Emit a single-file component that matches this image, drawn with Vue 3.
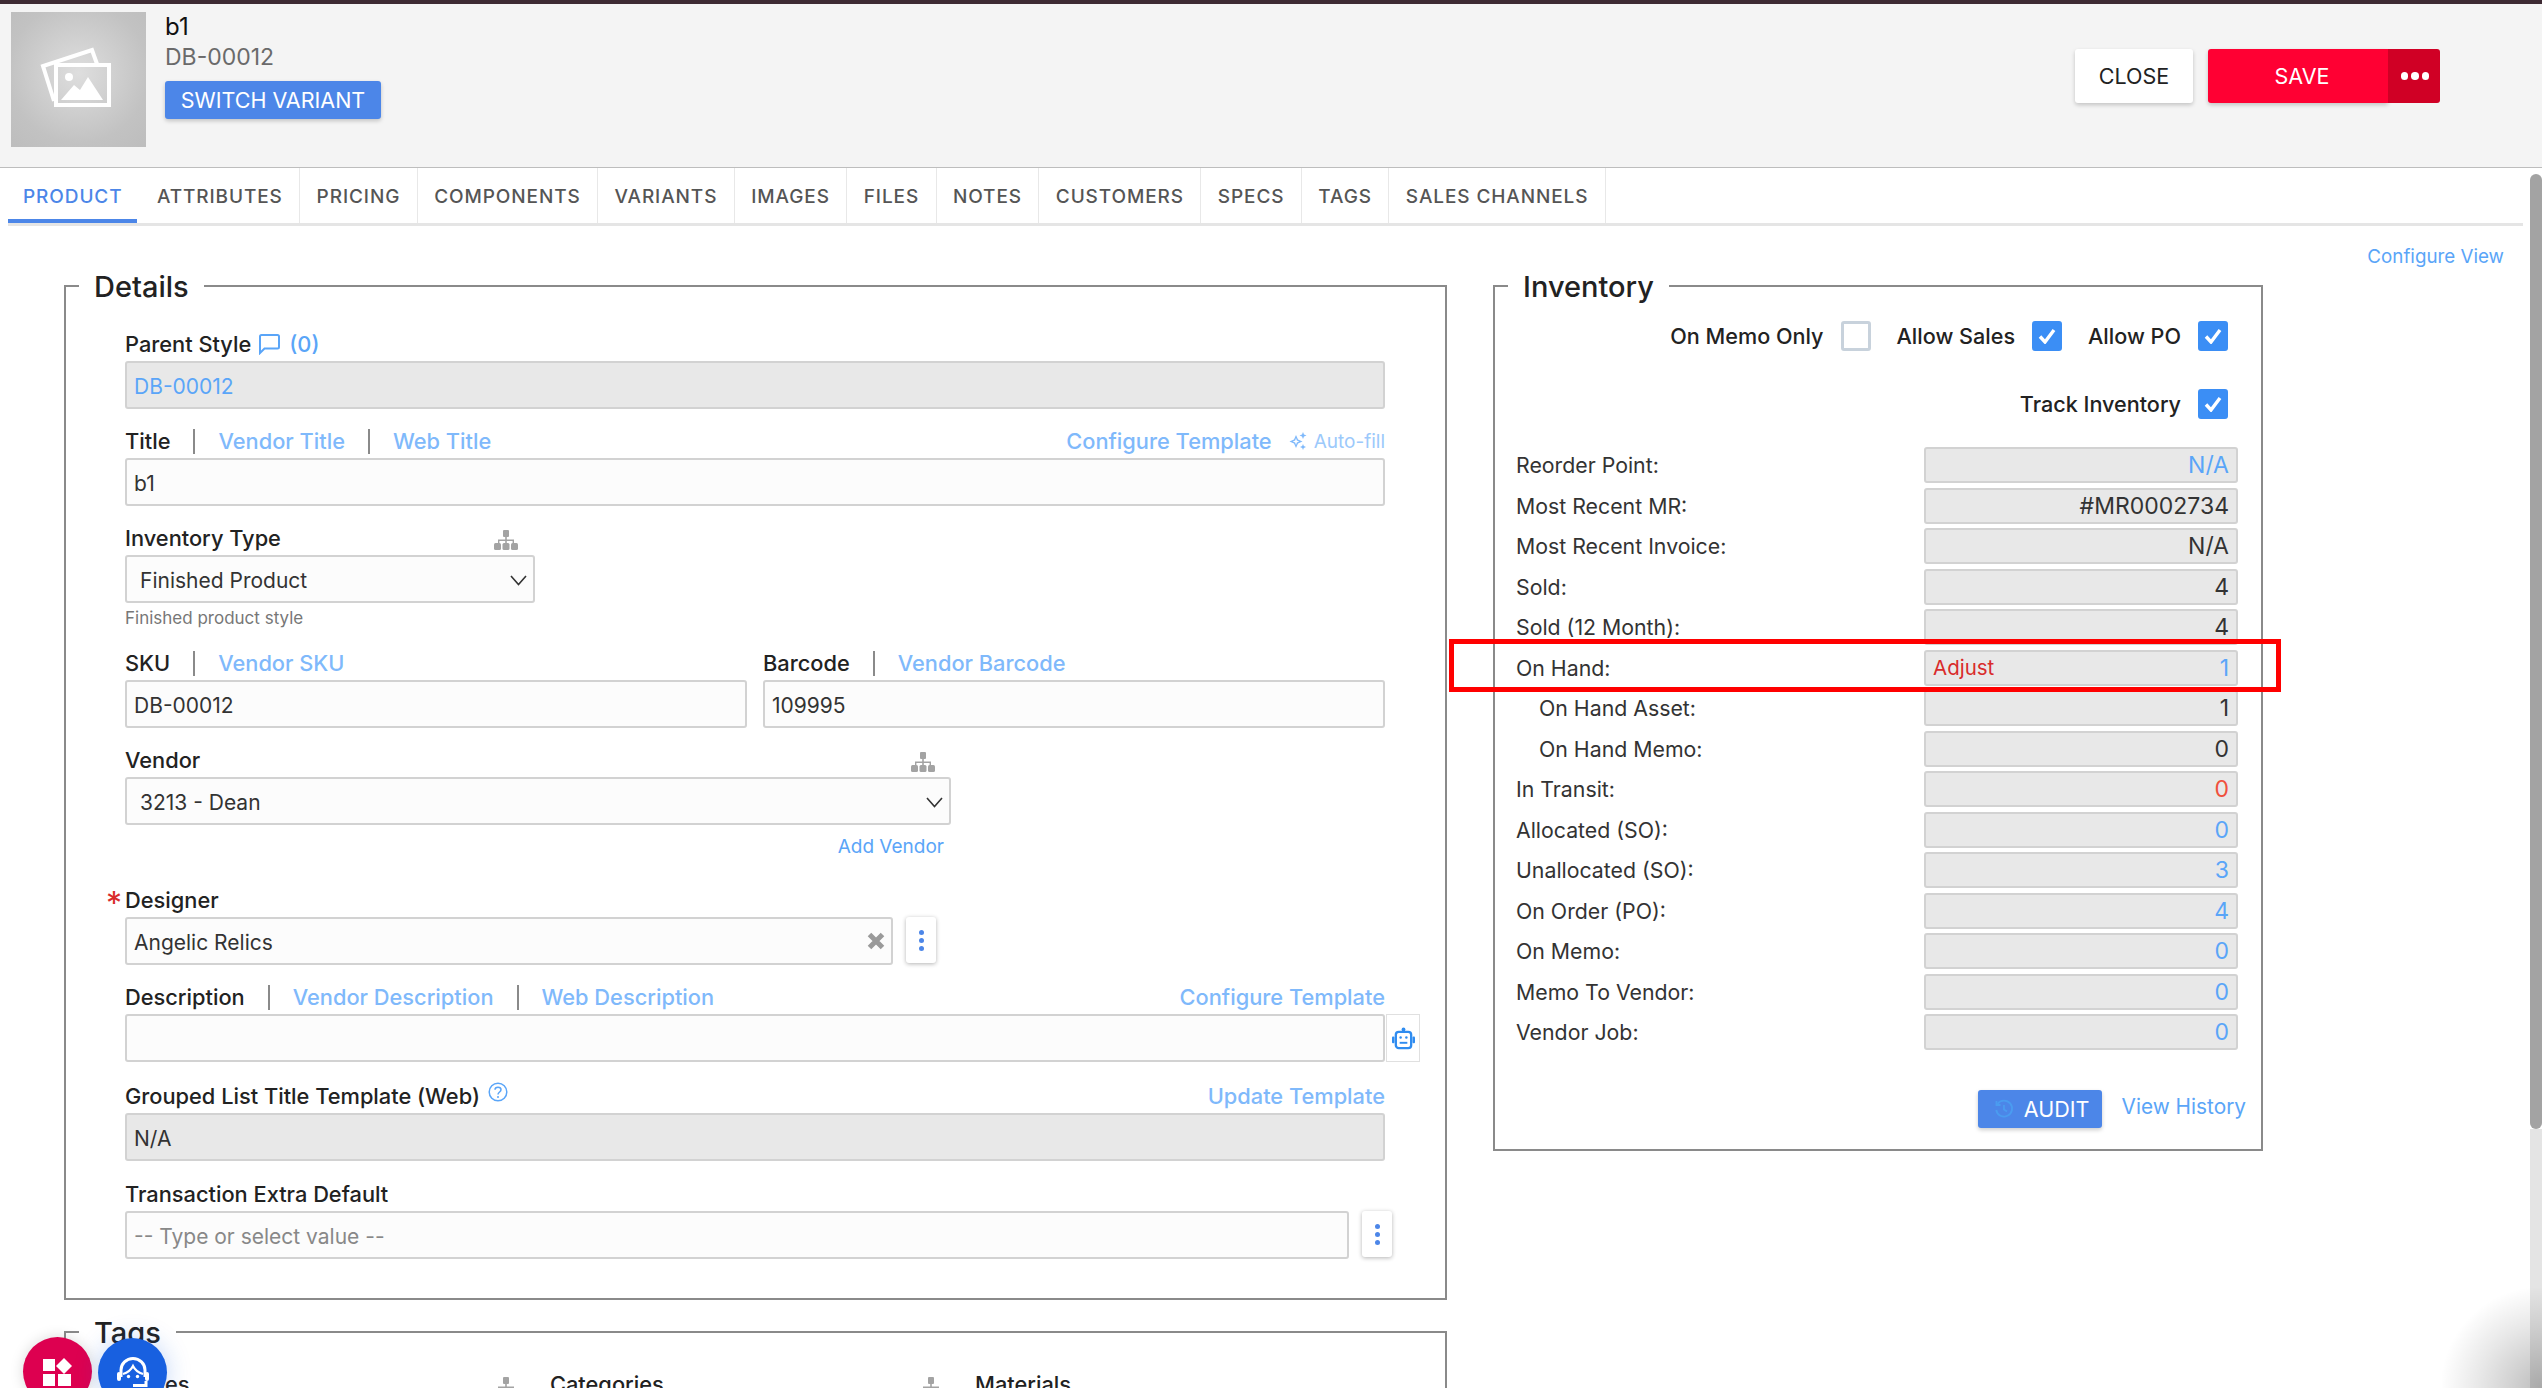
<script setup>
const tabs = ['Product', 'Attributes', 'Pricing', 'Components', 'Variants', 'Images', 'Files', 'Notes', 'Customers', 'Specs', 'Tags', 'Sales Channels']

const stockRows = [
  { label: 'Reorder Point:', value: 'N/A', tone: 'link' },
  { label: 'Most Recent MR:', value: '#MR0002734' },
  { label: 'Most Recent Invoice:', value: 'N/A' },
  { label: 'Sold:', value: '4' },
  { label: 'Sold (12 Month):', value: '4' },
  { label: 'On Hand:', value: '1', tone: 'link', adjust: true },
  { label: 'On Hand Asset:', value: '1', sub: true },
  { label: 'On Hand Memo:', value: '0', sub: true },
  { label: 'In Transit:', value: '0', tone: 'danger' },
  { label: 'Allocated (SO):', value: '0', tone: 'link' },
  { label: 'Unallocated (SO):', value: '3', tone: 'link' },
  { label: 'On Order (PO):', value: '4', tone: 'link' },
  { label: 'On Memo:', value: '0', tone: 'link' },
  { label: 'Memo To Vendor:', value: '0', tone: 'link' },
  { label: 'Vendor Job:', value: '0', tone: 'link' }
]
</script>

<template>
  <div class="page">
    <div class="top-strip"></div>

    <header class="header">
      <div class="thumb">
        <svg width="72" height="60" viewBox="0 0 72 60" fill="none" stroke="#fff" stroke-width="4">
          <path d="M14 54 L3 19 L52 3 L57 17" />
          <rect x="16" y="18" width="53" height="40" />
          <circle cx="29" cy="30" r="4" fill="#fff" stroke="none" />
          <path d="M21 53 L34 38 L40 43 L48 30 L63 53 Z" fill="#fff" stroke="none" />
        </svg>
      </div>
      <div class="header-info">
        <div class="item-title">b1</div>
        <div class="item-sku">DB-00012</div>
        <button class="btn btn-primary btn-switch">SWITCH VARIANT</button>
      </div>
      <div class="header-actions">
        <button class="btn btn-close">CLOSE</button>
        <button class="btn btn-save">SAVE</button>
        <button class="btn btn-more"><i></i><i></i><i></i></button>
      </div>
    </header>

    <div class="body">
      <main class="main">
        <nav class="tabs">
          <div v-for="(tab, i) in tabs" :key="tab" :class="['tab', { active: i === 0 }]">{{ tab }}</div>
        </nav>

        <div class="view-row"><a class="link">Configure View</a></div>

        <div class="columns">
          <div class="left-col">
            <fieldset class="box details">
              <legend>Details</legend>

              <div class="field">
                <div class="label-row">
                  <span class="lbl">Parent Style</span>
                  <svg class="comment-ico" width="23" height="22" viewBox="0 0 23 22" fill="none" stroke="#5aa5f8" stroke-width="2">
                    <path d="M2 20 V3.5 Q2 2 3.5 2 H19.5 Q21 2 21 3.5 V14 Q21 15.5 19.5 15.5 H6.5 Z" />
                  </svg>
                  <a class="link count">(0)</a>
                </div>
                <div class="input disabled link-text">DB-00012</div>
              </div>

              <div class="field">
                <div class="label-row">
                  <span class="lbl">Title</span><span class="sep"></span>
                  <a class="alt">Vendor Title</a><span class="sep"></span>
                  <a class="alt">Web Title</a>
                  <span class="spacer"></span>
                  <a class="alt">Configure Template</a>
                  <span class="autofill">
                    <svg width="18" height="18" viewBox="0 0 18 18" fill="#7fb9fb">
                      <path d="M7 3 L9 7.5 L13.5 9.5 L9 11.5 L7 16 L5 11.5 L0.5 9.5 L5 7.5 Z M7 6 L6.2 8.5 L3.8 9.5 L6.2 10.5 L7 13 L7.8 10.5 L10.2 9.5 L7.8 8.5 Z" fill-rule="evenodd" />
                      <path d="M14 0 L15 2.5 L17.5 3.5 L15 4.5 L14 7 L13 4.5 L10.5 3.5 L13 2.5 Z" />
                      <path d="M14 12 L14.8 14 L17 15 L14.8 16 L14 18 L13.2 16 L11 15 L13.2 14 Z" />
                    </svg>
                    Auto-fill
                  </span>
                </div>
                <div class="input">b1</div>
              </div>

              <div class="field w-type">
                <div class="label-row">
                  <span class="lbl">Inventory Type</span>
                  <span class="spacer"></span>
                  <svg class="org-ico org-type" width="24" height="20" viewBox="0 0 24 20" fill="#a3a3a3">
                    <rect x="9" y="0" width="6" height="7" rx="1" />
                    <path d="M11.2 7 H12.8 V9.5 H20 V13 H18.6 V11 H12.8 V13 H11.2 V11 H5.4 V13 H4 V9.5 H11.2 Z" />
                    <rect x="0" y="13" width="7" height="7" rx="1.5" />
                    <rect x="8.5" y="13" width="7" height="7" rx="1.5" />
                    <rect x="17" y="13" width="7" height="7" rx="1.5" />
                  </svg>
                </div>
                <div class="input select">
                  Finished Product
                  <svg class="chev" width="17" height="11" viewBox="0 0 17 11" fill="none" stroke="#333" stroke-width="1.6"><path d="M1 1 L8.5 9.5 L16 1" /></svg>
                </div>
                <div class="hint">Finished product style</div>
              </div>

              <div class="field two-col sku-row">
                <div class="col">
                  <div class="label-row">
                    <span class="lbl">SKU</span><span class="sep"></span>
                    <a class="alt">Vendor SKU</a>
                  </div>
                  <div class="input">DB-00012</div>
                </div>
                <div class="col">
                  <div class="label-row">
                    <span class="lbl strong">Barcode</span><span class="sep"></span>
                    <a class="alt">Vendor Barcode</a>
                  </div>
                  <div class="input">109995</div>
                </div>
              </div>

              <div class="field w-vendor">
                <div class="label-row">
                  <span class="lbl">Vendor</span>
                  <span class="spacer"></span>
                  <svg class="org-ico org-vendor" width="24" height="20" viewBox="0 0 24 20" fill="#a3a3a3">
                    <rect x="9" y="0" width="6" height="7" rx="1" />
                    <path d="M11.2 7 H12.8 V9.5 H20 V13 H18.6 V11 H12.8 V13 H11.2 V11 H5.4 V13 H4 V9.5 H11.2 Z" />
                    <rect x="0" y="13" width="7" height="7" rx="1.5" />
                    <rect x="8.5" y="13" width="7" height="7" rx="1.5" />
                    <rect x="17" y="13" width="7" height="7" rx="1.5" />
                  </svg>
                </div>
                <div class="input select">
                  3213 - Dean
                  <svg class="chev" width="17" height="11" viewBox="0 0 17 11" fill="none" stroke="#333" stroke-width="1.6"><path d="M1 1 L8.5 9.5 L16 1" /></svg>
                </div>
                <div class="add-vendor"><a class="link small">Add Vendor</a></div>
              </div>

              <div class="field designer">
                <div class="label-row">
                  <span class="required">*</span>
                  <span class="lbl">Designer</span>
                </div>
                <div class="with-menu">
                  <div class="input grow">
                    Angelic Relics
                    <svg class="clear" width="18" height="18" viewBox="0 0 18 18" fill="none" stroke="#9a9a9a" stroke-width="5"><path d="M2.5 2.5 L15.5 15.5 M15.5 2.5 L2.5 15.5" /></svg>
                  </div>
                  <button class="kebab"><i></i><i></i><i></i></button>
                </div>
              </div>

              <div class="field">
                <div class="label-row">
                  <span class="lbl">Description</span><span class="sep"></span>
                  <a class="alt">Vendor Description</a><span class="sep"></span>
                  <a class="alt">Web Description</a>
                  <span class="spacer"></span>
                  <a class="alt">Configure Template</a>
                </div>
                <div class="desc-row">
                  <div class="input grow"></div>
                  <div class="robot-btn">
                    <svg width="24" height="24" viewBox="0 0 24 24" fill="none" stroke="#2f8cf0" stroke-width="2.4">
                      <circle cx="12" cy="2.5" r="2" fill="#2f8cf0" stroke="none" />
                      <rect x="4" y="5" width="16" height="17" rx="3" />
                      <rect x="0" y="10" width="2.6" height="7" rx="1" fill="#2f8cf0" stroke="none" />
                      <rect x="21.4" y="10" width="2.6" height="7" rx="1" fill="#2f8cf0" stroke="none" />
                      <circle cx="9" cy="11" r="1.3" fill="#2f8cf0" stroke="none" />
                      <circle cx="15" cy="11" r="1.3" fill="#2f8cf0" stroke="none" />
                      <path d="M8 16.5 H16" stroke-width="2" />
                    </svg>
                  </div>
                </div>
              </div>

              <div class="field grouped">
                <div class="label-row">
                  <span class="lbl">Grouped List Title Template (Web)</span>
                  <svg class="help" width="20" height="20" viewBox="0 0 20 20" fill="none" stroke="#5aa5f8" stroke-width="1.5">
                    <circle cx="10" cy="10" r="8.8" />
                    <path d="M7 7.8 C7 4.5 13 4.5 13 7.8 C13 10 10 10 10 12.5" />
                    <circle cx="10" cy="15" r="1" fill="#5aa5f8" stroke="none" />
                  </svg>
                  <span class="spacer"></span>
                  <a class="alt">Update Template</a>
                </div>
                <div class="input disabled">N/A</div>
              </div>

              <div class="field transaction">
                <div class="label-row">
                  <span class="lbl">Transaction Extra Default</span>
                </div>
                <div class="with-menu tx-menu">
                  <div class="input grow placeholder">-- Type or select value --</div>
                  <button class="kebab"><i></i><i></i><i></i></button>
                </div>
              </div>
            </fieldset>

            <fieldset class="box tags">
              <legend>Tags</legend>
              <div class="tag-row">
                <div class="tag-col">
                  <span class="lbl">Styles</span>
                  <svg width="24" height="20" viewBox="0 0 24 20" fill="#a3a3a3">
                    <rect x="9" y="0" width="6" height="7" rx="1" />
                    <path d="M11.2 7 H12.8 V9.5 H20 V13 H4 V9.5 H11.2 Z" />
                  </svg>
                </div>
                <div class="tag-col">
                  <span class="lbl">Categories</span>
                  <svg width="24" height="20" viewBox="0 0 24 20" fill="#a3a3a3">
                    <rect x="9" y="0" width="6" height="7" rx="1" />
                    <path d="M11.2 7 H12.8 V9.5 H20 V13 H4 V9.5 H11.2 Z" />
                  </svg>
                </div>
                <div class="tag-col">
                  <span class="lbl">Materials</span>
                </div>
              </div>
            </fieldset>
          </div>

          <fieldset class="box inventory">
            <legend>Inventory</legend>

            <div class="checks first">
              <span class="check-label">On Memo Only</span><span class="check"></span>
              <span class="check-label">Allow Sales</span>
              <span class="check on"><svg width="18" height="16" viewBox="0 0 18 16" fill="none" stroke="#fff" stroke-width="3.4"><path d="M2 8.5 L7 14 L16 2" /></svg></span>
              <span class="check-label">Allow PO</span>
              <span class="check on"><svg width="18" height="16" viewBox="0 0 18 16" fill="none" stroke="#fff" stroke-width="3.4"><path d="M2 8.5 L7 14 L16 2" /></svg></span>
            </div>
            <div class="checks second">
              <span class="check-label">Track Inventory</span>
              <span class="check on"><svg width="18" height="16" viewBox="0 0 18 16" fill="none" stroke="#fff" stroke-width="3.4"><path d="M2 8.5 L7 14 L16 2" /></svg></span>
            </div>

            <div class="stock">
              <div v-for="row in stockRows" :key="row.label" class="stock-row">
                <span :class="['stock-label', { sub: row.sub }]">{{ row.label }}</span>
                <div class="stock-value">
                  <span v-if="row.adjust" class="adjust">Adjust</span>
                  <span :class="['val', row.tone]">{{ row.value }}</span>
                </div>
              </div>
            </div>

            <div class="audit-row">
              <button class="btn btn-primary btn-audit">
                <svg width="20" height="20" viewBox="0 0 20 20" fill="none" stroke="#4a9cf0" stroke-width="1.8">
                  <path d="M3.5 5 A8 8 0 1 1 2.2 11" />
                  <path d="M2.5 2 V6 H6.5" />
                  <path d="M10 6 V10.5 L13 12.5" />
                </svg>
                AUDIT
              </button>
              <a class="link history">View History</a>
            </div>
          </fieldset>
        </div>
      </main>

      <div class="scrollbar">
        <div class="thumb-bar"></div>
        <div class="track"></div>
      </div>
    </div>

    <!-- highlight drawn over the On Hand row -->
    <div class="highlight"></div>

    <div class="bubble bubble-red">
      <svg width="34" height="34" viewBox="0 0 34 34" fill="#fff">
        <rect x="1" y="1" width="12" height="12" />
        <path d="M22 0 L30 8 L22 16 L14 8 Z" />
        <rect x="1" y="16" width="12" height="12" />
        <rect x="16" y="16" width="13" height="12" />
      </svg>
    </div>
    <div class="bubble bubble-blue">
      <svg width="34" height="34" viewBox="0 0 34 34" fill="none" stroke="#fff" stroke-width="3">
        <path d="M5 20 V13 A12 11.5 0 0 1 29 13 V20" />
        <path d="M7 17 Q14 15 17 9 Q20 15 27 17" stroke-width="2.2" />
        <circle cx="12.5" cy="19.5" r="1.7" fill="#fff" stroke="none" />
        <circle cx="21.5" cy="19.5" r="1.7" fill="#fff" stroke="none" />
        <rect x="1" y="15" width="4" height="9" rx="2" fill="#fff" stroke="none" />
        <rect x="29" y="15" width="4" height="9" rx="2" fill="#fff" stroke="none" />
        <path d="M30 24 V28.5 H17" />
      </svg>
    </div>
    <div class="corner-shade"></div>
  </div>
</template>

<style>
html, body { margin: 0; background: #fff; }
</style>

<style scoped>
.page {
  position: relative;
  height: 1388px;
  overflow: hidden;
  display: flex;
  flex-direction: column;
  background: #fff;
  color: #222;
  font-family: Inter, "Liberation Sans", sans-serif;
  font-size: 21px;
}
.top-strip { height: 4px; background: #3d2a33; flex-shrink: 0; }

.header {
  height: 163px;
  flex-shrink: 0;
  display: flex;
  background: #f4f4f4;
  border-bottom: 1px solid #bdbdbd;
  box-sizing: content-box;
}
.thumb {
  width: 135px;
  height: 135px;
  margin: 8px 0 0 11px;
  background: radial-gradient(circle at 50% 45%, #dedede 0%, #c2c2c2 70%, #bdbdbd 100%);
  display: flex;
  align-items: center;
  justify-content: center;
}
.thumb svg { margin: 0 6px 5px 0; }
.header-info { padding: 9px 0 0 19px; flex: 1; }
.item-title { font-size: 24px; line-height: 28px; color: #111; }
.item-sku { font-size: 23px; line-height: 28px; margin-top: 2px; color: #6a6a6a; }
.btn {
  border: none;
  border-radius: 3px;
  font-family: inherit;
  cursor: pointer;
}
.btn-primary { background: #4c86e8; color: #fff; box-shadow: 0 2px 4px rgba(0,0,0,.2); }
.btn-switch { margin-top: 10px; width: 216px; height: 38px; font-size: 21.5px; padding: 0; display: block; }
.header-actions { display: flex; padding: 45px 102px 0 0; align-items: flex-start; }
.btn-close { width: 118px; height: 54px; background: #fff; color: #222; font-size: 21.5px; margin-right: 15px; box-shadow: 0 2px 4px rgba(0,0,0,.2); }
.btn-save { width: 180px; height: 54px; background: #ff0033; color: #fff; font-size: 21.5px; border-radius: 3px 0 0 3px; box-shadow: 0 2px 4px rgba(0,0,0,.2); padding: 0 0 0 8px; }
.btn-more {
  width: 52px;
  height: 54px;
  background: #d00025;
  border-radius: 0 3px 3px 0;
  display: flex;
  align-items: center;
  justify-content: center;
  gap: 3px;
  padding: 0 0 0 2px;
}
.btn-more i { width: 7.5px; height: 7.5px; border-radius: 50%; background: #fff; display: block; }

.body { flex: 1; display: flex; min-height: 0; }
.main { flex: 1; min-width: 0; }

.tabs {
  display: flex;
  height: 55px;
  margin: 0 7px 0 8px;
  border-bottom: 3px solid #e5e5e5;
  box-sizing: content-box;
}
.tab {
  padding: 0 15px;
  line-height: 57px;
  height: 55px;
  font-size: 19px;
  font-weight: 500;
  letter-spacing: .9px;
  text-transform: uppercase;
  color: #555;
  border-right: 1px solid #e8e8e8;
  margin-right: 3px;
  position: relative;
}
.tab + .tab { margin-right: 0; padding: 0 16.45px; }
.tab.active { color: #4c86e8; border-right: none; }
.tab.active::after {
  content: '';
  position: absolute;
  left: 0;
  right: 0;
  bottom: 0;
  height: 4px;
  background: #4c86e8;
}

.view-row { height: 43px; display: flex; align-items: flex-end; justify-content: flex-end; padding-right: 26px; }
.view-row .link { font-size: 18.8px; line-height: 24px; }
.link { color: #5aa5f8; }
.alt { color: #7fb9fb; font-weight: 500; font-size: 21.8px; }

.columns { display: flex; align-items: flex-start; gap: 46px; padding-left: 64px; }
.left-col { display: flex; flex-direction: column; gap: 15px; }

.box { margin: 0; padding: 0; border: 2px solid #8a8a8a; min-width: 0; box-sizing: border-box; }
.box legend { margin-left: 13px; padding: 0 15px; font-size: 29px; line-height: 34px; font-weight: 500; color: #222; position: relative; top: 1px; }

.details { width: 1383px; padding: 29px 60px 39px 59px; }
.box.details legend { margin-left: -46px; }
.tags { width: 1383px; height: 300px; }

.field { margin-top: 20px; }
.field:first-of-type { margin-top: 0; }
.label-row { height: 24px; margin-bottom: 5px; display: flex; align-items: center; }
.lbl { font-weight: 500; color: #222; font-size: 21.8px; line-height: 24px; }
.spacer { flex: 1; }
.sep { width: 2px; height: 25px; background: #8a8a8a; margin: 0 23px; }
.count { font-weight: 500; font-size: 21.8px; margin-left: 8px; }
.comment-ico { margin-left: 7px; }
.autofill { margin-left: 17px; font-size: 19px; color: #9cc9fb; display: flex; align-items: center; gap: 7px; }

.input {
  height: 48px;
  box-sizing: border-box;
  border: 2px solid #d2d2d2;
  border-radius: 3px;
  background: #fcfcfc;
  padding: 2px 7px 0;
  display: flex;
  align-items: center;
  color: #333;
  font-size: 21px;
  position: relative;
}
.input.disabled { background: #e8e8e8; }
.input.link-text { color: #5aa5f8; }
.input.placeholder { color: #888; }
.input.grow { flex: 1; }
.input.select { padding-left: 13px; justify-content: space-between; padding-right: 6px; }

.w-type { width: 410px; }
.hint { font-size: 17px; line-height: 22px; margin-top: 4px; color: #777; }
.org-type { margin-right: 17px; margin-top: 4px; }
.two-col { display: flex; gap: 16px; }
.two-col .col { flex: 1; }
.sku-row { margin-top: 22px; }
.w-vendor { width: 826px; }
.org-vendor { margin-right: 16px; margin-top: 4px; }
.add-vendor { text-align: right; margin-top: 9px; padding-right: 7px; line-height: 24px; }
.small { font-size: 19px; }

.designer { margin-top: 29px; position: relative; }
.required { position: absolute; left: -19px; color: #d92b2b; font-size: 32px; line-height: 32px; top: 0; }
.with-menu { display: flex; gap: 13px; width: 811px; align-items: flex-start; }
.tx-menu { width: 1267px; }
.clear { position: absolute; right: 6px; top: 13px; }
.kebab {
  width: 30px;
  height: 46px;
  padding: 0;
  border: none;
  background: #fff;
  border-radius: 3px;
  box-shadow: 0 1px 4px rgba(0,0,0,.3);
  display: flex;
  flex-direction: column;
  align-items: center;
  justify-content: center;
  gap: 3px;
  flex-shrink: 0;
}
.kebab i { width: 5px; height: 5px; border-radius: 50%; background: #4c86e8; display: block; }

.desc-row { display: flex; margin-right: -35px; }
.robot-btn {
  width: 34px;
  height: 48px;
  box-sizing: border-box;
  border: 1px solid #e0e0e0;
  margin-left: 1px;
  display: flex;
  align-items: center;
  justify-content: center;
}
.robot-btn svg { width: 23px; height: 27px; }
.grouped { margin-top: 22px; }
.help { margin-left: 8px; margin-top: -9px; }
.transaction { margin-top: 21px; }

.tag-row { display: flex; padding: 23px 0 0 59px; }
.tag-col { width: 425px; display: flex; align-items: flex-start; justify-content: space-between; }
.tag-col svg { margin: 5px 32px 0 0; }

.inventory { width: 770px; padding: 0 0 21px; }
.checks { display: flex; justify-content: flex-end; align-items: center; padding-right: 33px; }
.checks.first { margin-top: 18px; }
.checks.second { margin-top: 38px; }
.check-label { font-weight: 500; font-size: 21.6px; margin: 0 17px 0 26px; color: #222; }
.check {
  width: 30px;
  height: 30px;
  box-sizing: border-box;
  border: 3px solid #c8d2dc;
  border-radius: 3px;
  background: #fff;
  display: flex;
  align-items: center;
  justify-content: center;
}
.check.on { background: #3b8ef5; border-color: #3b8ef5; }

.stock { margin-top: 28px; padding: 0 23px 0 21px; display: flex; flex-direction: column; gap: 4.5px; }
.stock-row { display: flex; align-items: center; justify-content: space-between; height: 36px; }
.stock-label { font-size: 21.3px; color: #333; }
.stock-label.sub { margin-left: 23px; }
.stock-value {
  width: 314px;
  height: 36px;
  box-sizing: border-box;
  border: 2px solid #d2d2d2;
  border-radius: 3px;
  background: #e8e8e8;
  padding: 0 7px;
  display: flex;
  align-items: center;
  justify-content: space-between;
}
.val { margin-left: auto; font-size: 23px; color: #333; }
.val.link { color: #5aa5f8; }
.val.danger { color: #f0503c; }
.adjust { color: #d92b2b; font-size: 20.5px; }

.audit-row { margin-top: 40px; display: flex; justify-content: flex-end; align-items: flex-start; gap: 20px; padding-right: 15px; }
.btn-audit {
  width: 124px;
  height: 38px;
  font-size: 21.5px;
  display: flex;
  align-items: center;
  justify-content: center;
  gap: 10px;
  padding: 0 0 0 4px;
}
.history { font-size: 20.8px; line-height: 34px; }

.scrollbar { width: 12px; flex-shrink: 0; padding-top: 6px; display: flex; flex-direction: column; }
.thumb-bar { height: 955px; background: #a3a3a3; border-radius: 8px; flex-shrink: 0; }
.track { flex: 1; background: #e4e4e4; }

.highlight {
  position: absolute;
  left: 1449px;
  top: 639px;
  width: 832px;
  height: 53px;
  box-sizing: border-box;
  border: 5px solid #f00;
}

.bubble {
  position: absolute;
  width: 69px;
  height: 69px;
  border-radius: 50%;
  display: flex;
  align-items: flex-start;
  justify-content: center;
}
.bubble-red { left: 23px; top: 1337px; background: #dd0050; box-shadow: 0 0 14px rgba(0,0,0,.15); }
.bubble-red svg { margin: 21px 0 0 3px; }
.bubble-blue { left: 98px; top: 1338px; background: #1860e0; box-shadow: 0 0 24px rgba(24,96,224,.25); }
.bubble-blue svg { margin-top: 19px; }
.corner-shade {
  position: absolute;
  right: 0;
  bottom: 0;
  width: 100px;
  height: 100px;
  pointer-events: none;
  background: radial-gradient(circle at 100% 100%, rgba(0,0,0,.26) 0%, rgba(0,0,0,.09) 45%, rgba(0,0,0,0) 72%);
}
</style>
